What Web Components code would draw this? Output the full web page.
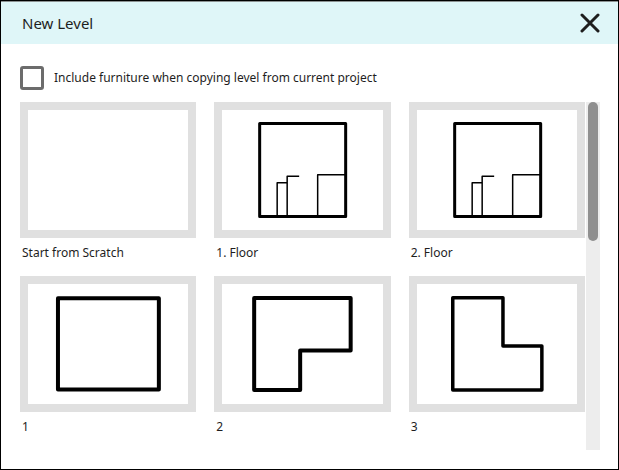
<!DOCTYPE html>
<html lang="en">
<head>
<meta charset="utf-8">
<title>New Level</title>
<style>
  html, body { margin: 0; height: 100%; }
  body { font-family: "Noto Sans", "Open Sans", sans-serif; font-size: 12px; color: #1e1e1e; background: #fff; }
</style>
</head>
<body>
<level-dialog heading="New Level">
  <check-option slot="options" label="Include furniture when copying level from current project"></check-option>
  <level-tile label="Start from Scratch"></level-tile>
  <level-tile label="1. Floor" plan="furnished"></level-tile>
  <level-tile label="2. Floor" plan="furnished"></level-tile>
  <level-tile label="1" plan="square"></level-tile>
  <level-tile label="2" plan="notch-low"></level-tile>
  <level-tile label="3" plan="notch-high"></level-tile>
</level-dialog>

<script>
class LevelDialog extends HTMLElement {
  connectedCallback() {
    this.attachShadow({ mode: 'open' }).innerHTML = `
      <style>
        :host { display: flex; flex-direction: column; box-sizing: border-box; min-height: 100%; border: 1px solid #000; background: #fff; }
        header { display: flex; align-items: center; justify-content: space-between; height: 42px; padding: 0 18px 0 21px; border-top: 1px solid #8c9292; background: #dff6f8; }
        h1 { margin: 0; font-size: 15px; line-height: 24px; font-weight: 400; }
        button { display: block; padding: 0; border: 0; background: none; color: #1e1e1e; cursor: pointer; }
        svg { display: block; }
        main { display: flex; flex: 1; flex-direction: column; gap: 12px; padding: 22px 18px 19px 19px; }
        .scroller { display: flex; flex: 1; gap: 1px; }
        .grid { display: grid; flex: 1; grid-template-columns: repeat(auto-fill, minmax(176px, 1fr)); column-gap: 18px; align-content: start; }
        .track { flex: none; width: 14px; background: #ededed; }
        .thumb { height: 40%; margin: 0 2px; border-radius: 5px; background: #8f8f8f; }
      </style>
      <header>
        <h1></h1>
        <button type="button" aria-label="Close">
          <svg width="20" height="20" viewBox="0 0 20 20" fill="none" stroke="currentColor" stroke-width="3" stroke-linecap="round"><path d="M2 2 18 18M18 2 2 18"/></svg>
        </button>
      </header>
      <main>
        <slot name="options"></slot>
        <div class="scroller">
          <div class="grid"><slot></slot></div>
          <div class="track"><div class="thumb"></div></div>
        </div>
      </main>`;
    this.shadowRoot.querySelector('h1').textContent = this.getAttribute('heading');
  }
}

class CheckOption extends HTMLElement {
  connectedCallback() {
    this.attachShadow({ mode: 'open' }).innerHTML = `
      <style>
        :host { display: block; }
        label { display: flex; align-items: center; gap: 10px; line-height: 24px; }
        input { appearance: none; box-sizing: border-box; flex: none; width: 24px; height: 24px; margin: 0; border: 3px solid #6c6c6c; border-radius: 3px; background: #fff; }
        input:checked { background: #6c6c6c; }
      </style>
      <label><input type="checkbox"><span></span></label>`;
    this.shadowRoot.querySelector('span').textContent = this.getAttribute('label');
  }
}

const PLANS = {
  'furnished': `<path stroke-width="3" d="M37.5 13.5H123.5V106.5H37.5Z"/>
    <path stroke-width="1.5" d="M55 106V72.7H65M65 106V66.3H77M95.5 106V64.7H123"/>`,
  'square': '<path stroke-width="4" d="M29.8 14.2H130.7V105.6H29.8Z"/>',
  'notch-low': '<path stroke-width="4" d="M32 14H128.5V66.4H78V106H32Z"/>',
  'notch-high': '<path stroke-width="3.5" d="M35.6 13.8H85.8V62H124.7V106H35.6Z"/>'
};

class LevelTile extends HTMLElement {
  connectedCallback() {
    this.attachShadow({ mode: 'open' }).innerHTML = `
      <style>
        :host { display: block; }
        button { display: block; width: 100%; padding: 0; border: 0; background: none; font: inherit; color: inherit; text-align: left; cursor: pointer; }
        .frame { display: block; border: 8px solid #e0e0e0; background: #fff; }
        svg { display: block; width: 100%; height: 120px; }
        .name { display: block; padding: 5px 2px 13px; line-height: 20px; }
      </style>
      <button type="button">
        <span class="frame"><svg viewBox="0 0 160 120" fill="none" stroke="#000" stroke-linejoin="round" aria-hidden="true">${PLANS[this.getAttribute('plan')] || ''}</svg></span>
        <span class="name"></span>
      </button>`;
    this.shadowRoot.querySelector('.name').textContent = this.getAttribute('label');
  }
}

customElements.define('level-dialog', LevelDialog);
customElements.define('check-option', CheckOption);
customElements.define('level-tile', LevelTile);
</script>
</body>
</html>
